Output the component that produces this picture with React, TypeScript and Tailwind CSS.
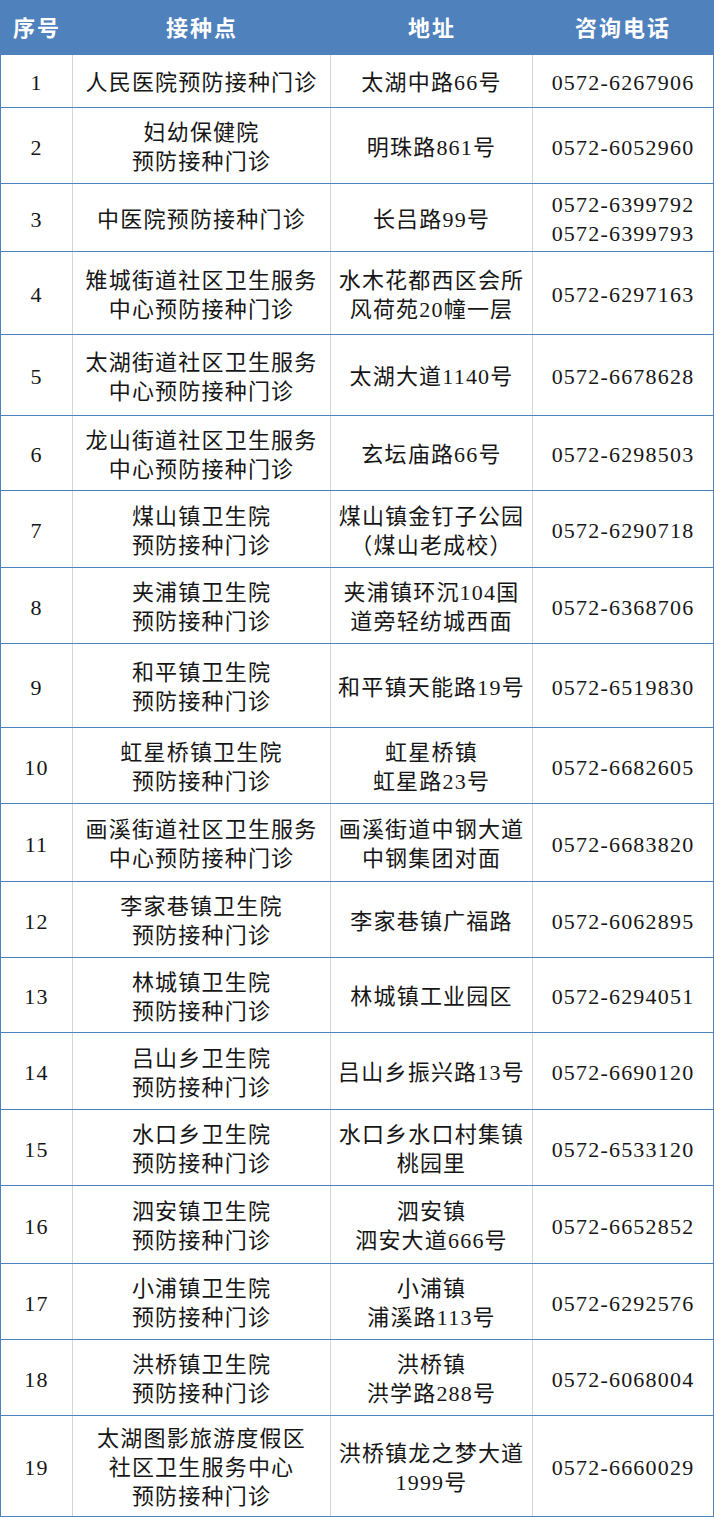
import React from 'react'

interface Row {
  no: number
  name: string[]
  addr: string[]
  tel: string[]
  h: string
}

const rows: Row[] = [
  { no: 1, name: ['人民医院预防接种门诊'], addr: ['太湖中路66号'], tel: ['0572-6267906'], h: 'h-[53px]' },
  { no: 2, name: ['妇幼保健院', '预防接种门诊'], addr: ['明珠路861号'], tel: ['0572-6052960'], h: 'h-[76px]' },
  { no: 3, name: ['中医院预防接种门诊'], addr: ['长吕路99号'], tel: ['0572-6399792', '0572-6399793'], h: 'h-[68px]' },
  { no: 4, name: ['雉城街道社区卫生服务', '中心预防接种门诊'], addr: ['水木花都西区会所', '风荷苑20幢一层'], tel: ['0572-6297163'], h: 'h-[83px]' },
  { no: 5, name: ['太湖街道社区卫生服务', '中心预防接种门诊'], addr: ['太湖大道1140号'], tel: ['0572-6678628'], h: 'h-[81px]' },
  { no: 6, name: ['龙山街道社区卫生服务', '中心预防接种门诊'], addr: ['玄坛庙路66号'], tel: ['0572-6298503'], h: 'h-[75px]' },
  { no: 7, name: ['煤山镇卫生院', '预防接种门诊'], addr: ['煤山镇金钉子公园', '（煤山老成校）'], tel: ['0572-6290718'], h: 'h-[77px]' },
  { no: 8, name: ['夹浦镇卫生院', '预防接种门诊'], addr: ['夹浦镇环沉104国', '道旁轻纺城西面'], tel: ['0572-6368706'], h: 'h-[76px]' },
  { no: 9, name: ['和平镇卫生院', '预防接种门诊'], addr: ['和平镇天能路19号'], tel: ['0572-6519830'], h: 'h-[84px]' },
  { no: 10, name: ['虹星桥镇卫生院', '预防接种门诊'], addr: ['虹星桥镇', '虹星路23号'], tel: ['0572-6682605'], h: 'h-[76px]' },
  { no: 11, name: ['画溪街道社区卫生服务', '中心预防接种门诊'], addr: ['画溪街道中钢大道', '中钢集团对面'], tel: ['0572-6683820'], h: 'h-[78px]' },
  { no: 12, name: ['李家巷镇卫生院', '预防接种门诊'], addr: ['李家巷镇广福路'], tel: ['0572-6062895'], h: 'h-[76px]' },
  { no: 13, name: ['林城镇卫生院', '预防接种门诊'], addr: ['林城镇工业园区'], tel: ['0572-6294051'], h: 'h-[75px]' },
  { no: 14, name: ['吕山乡卫生院', '预防接种门诊'], addr: ['吕山乡振兴路13号'], tel: ['0572-6690120'], h: 'h-[77px]' },
  { no: 15, name: ['水口乡卫生院', '预防接种门诊'], addr: ['水口乡水口村集镇', '桃园里'], tel: ['0572-6533120'], h: 'h-[76px]' },
  { no: 16, name: ['泗安镇卫生院', '预防接种门诊'], addr: ['泗安镇', '泗安大道666号'], tel: ['0572-6652852'], h: 'h-[78px]' },
  { no: 17, name: ['小浦镇卫生院', '预防接种门诊'], addr: ['小浦镇', '浦溪路113号'], tel: ['0572-6292576'], h: 'h-[76px]' },
  { no: 18, name: ['洪桥镇卫生院', '预防接种门诊'], addr: ['洪桥镇', '洪学路288号'], tel: ['0572-6068004'], h: 'h-[76px]' },
  { no: 19, name: ['太湖图影旅游度假区', '社区卫生服务中心', '预防接种门诊'], addr: ['洪桥镇龙之梦大道', '1999号'], tel: ['0572-6660029'], h: 'h-[101px]' },
]

const cols = 'grid grid-cols-[72px_258px_202px_180px]'

function Cell({ lines, last }: { lines: string[]; last?: boolean }) {
  return (
    <div
      className={`flex flex-col items-center justify-center pt-[3px] text-center ${
        last ? '' : 'border-r border-[#d4d4d4]'
      }`}
    >
      {lines.map((l) => (
        <div key={l} className="leading-[29px] whitespace-nowrap">
          {l}
        </div>
      ))}
    </div>
  )
}

export default function App() {
  return (
    <div
      className="w-[714px] bg-white text-[#161616] text-[22px] tracking-[1.2px]"
      style={{ fontFamily: '"Liberation Serif", "Noto Sans CJK SC", serif' }}
    >
      <div className="border-x border-[#4f81bd]">
        {/* 表头 */}
        <div className={`${cols} h-[55px] bg-[#4f81bd] pt-[2px] text-white font-bold tracking-[2px]`}>
          <div className="flex items-center justify-center">序号</div>
          <div className="flex items-center justify-center">接种点</div>
          <div className="flex items-center justify-center">地址</div>
          <div className="flex items-center justify-center">咨询电话</div>
        </div>

        {rows.map((r) => (
          <div key={r.no} className={`${cols} ${r.h} border-b border-[#4f81bd]`}>
            <Cell lines={[String(r.no)]} />
            <Cell lines={r.name} />
            <Cell lines={r.addr} />
            <Cell lines={r.tel} last />
          </div>
        ))}
      </div>
    </div>
  )
}
